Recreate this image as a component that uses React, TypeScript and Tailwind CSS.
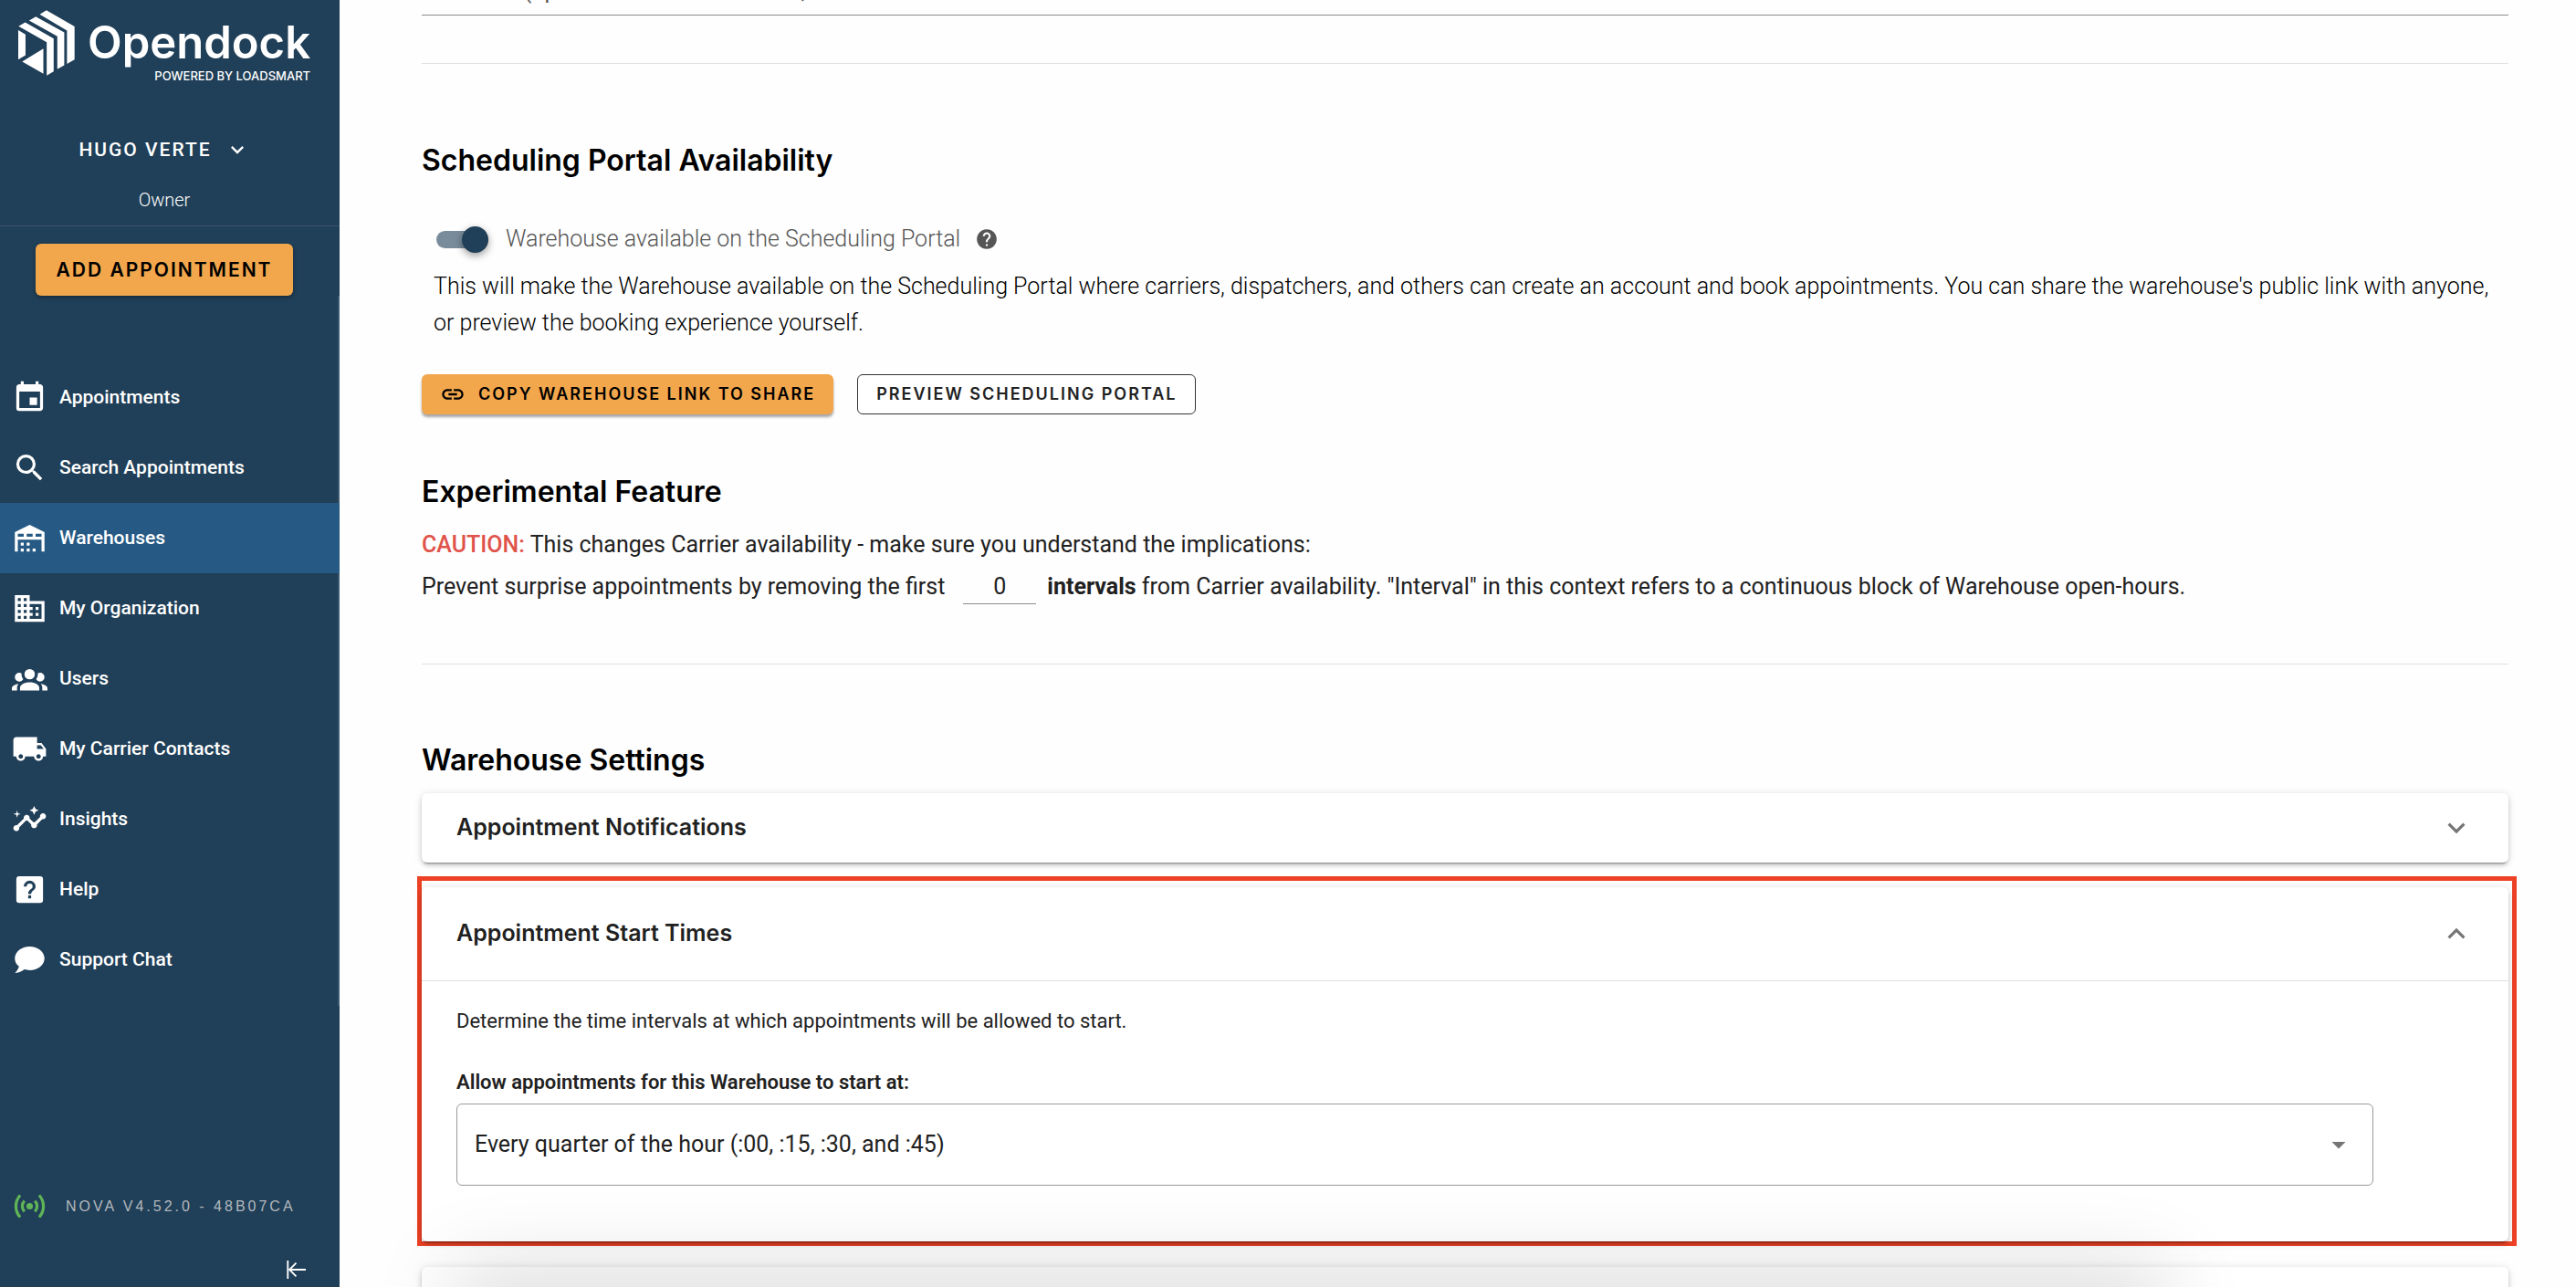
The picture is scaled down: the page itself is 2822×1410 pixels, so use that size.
import * as React from "react";
import {
    MdBusiness,
    MdEvent,
    MdHelp,
    MdInsights,
    MdKeyboardArrowDown,
    MdKeyboardArrowUp,
    MdLink,
    MdLocalShipping,
    MdSearch,
    MdArrowDropDown,
} from "react-icons/md";

type IconProps = { className?: string };

const WarehouseIcon: React.FC<IconProps> = ({ className }) => (
    <svg viewBox="0 0 24 24" fill="currentColor" className={className} aria-hidden="true">
        <path d="M6 19H8V21H6V19M12 3L2 8V21H4V13H20V21H22V8L12 3M8 11H4V9H8V11M14 11H10V9H14V11M20 11H16V9H20V11M6 15H8V17H6V15M10 15H12V17H10V15M10 19H12V21H10V19M14 19H16V21H14V19Z" />
    </svg>
);

const UsersIcon: React.FC<IconProps> = ({ className }) => (
    <svg viewBox="0 0 24 24" fill="currentColor" className={className} aria-hidden="true">
        <path d="M12,5.5A3.5,3.5 0 0,1 15.5,9A3.5,3.5 0 0,1 12,12.5A3.5,3.5 0 0,1 8.5,9A3.5,3.5 0 0,1 12,5.5M5,8C5.56,8 6.08,8.15 6.53,8.42C6.38,9.85 6.8,11.27 7.66,12.38C7.16,13.34 6.16,14 5,14A3,3 0 0,1 2,11A3,3 0 0,1 5,8M19,8A3,3 0 0,1 22,11A3,3 0 0,1 19,14C17.84,14 16.84,13.34 16.34,12.38C17.2,11.27 17.62,9.85 17.47,8.42C17.92,8.15 18.44,8 19,8M5.5,18.25C5.5,16.18 8.41,14.5 12,14.5C15.59,14.5 18.5,16.18 18.5,18.25V20H5.5V18.25M0,20V18.5C0,17.11 1.89,15.94 4.45,15.6C3.86,16.28 3.5,17.22 3.5,18.25V20H0M24,20H20.5V18.25C20.5,17.22 20.14,16.28 19.55,15.6C22.11,15.94 24,17.11 24,18.5V20Z" />
    </svg>
);

const HelpBoxIcon: React.FC<IconProps> = ({ className }) => (
    <svg viewBox="0 0 24 24" fill="currentColor" className={className} aria-hidden="true">
        <path d="M11,18H13V16H11V18M12,6A4,4 0 0,0 8,10H10A2,2 0 0,1 12,8A2,2 0 0,1 14,10C14,12 11,11.75 11,15H13C13,12.75 16,12.5 16,10A4,4 0 0,0 12,6M5,3H19A2,2 0 0,1 21,5V19A2,2 0 0,1 19,21H5A2,2 0 0,1 3,19V5A2,2 0 0,1 5,3Z" fillRule="evenodd" />
    </svg>
);

const ChatIcon: React.FC<IconProps> = ({ className }) => (
    <svg viewBox="0 0 24 24" fill="currentColor" className={className} aria-hidden="true">
        <path d="M12 3C17.5 3 22 6.58 22 11S17.5 19 12 19C10.76 19 9.57 18.82 8.47 18.5C5.55 21 2 21 2 21C4.33 18.67 4.7 17.1 4.75 16.5C3.05 15.07 2 13.13 2 11C2 6.58 6.5 3 12 3Z" />
    </svg>
);

const BroadcastIcon: React.FC<IconProps> = ({ className }) => (
    <svg viewBox="0 0 24 24" fill="none" stroke="currentColor" strokeWidth="2" className={className} aria-hidden="true">
        <circle cx="12" cy="12" r="2.2" fill="currentColor" stroke="none" />
        <path d="M8.5 8.4a5.1 5.1 0 0 0 0 7.2M15.5 8.4a5.1 5.1 0 0 1 0 7.2M5.6 4.6a11 11 0 0 0 0 14.8M18.4 4.6a11 11 0 0 1 0 14.8" />
    </svg>
);

const CollapseIcon: React.FC<IconProps> = ({ className }) => (
    <svg viewBox="0 0 24 24" fill="none" stroke="currentColor" strokeWidth="2" className={className} aria-hidden="true">
        <path d="M2.5 1v22M24 12H5M12.5 4l-8 8 8 8" />
    </svg>
);

const Logo = () => (
    <a href="#" className="flex items-start gap-3.5 pt-[11px] pl-5 text-white">
        <svg viewBox="60 33 187 216" fill="currentColor" className="h-[72px] w-[62px] shrink-0" aria-hidden="true">
            <path d="M153 33 246 87V196L221 210V100L131 47Z" />
            <path d="M118 54 212 106V215L189 228V119L96 67Z" />
            <path d="M83 73 177 127V235L154 249V139L61 86Z" />
            <path d="M60 99 84 113V182L60 196Z" />
            <path d="M143 160V243L73 203Z" />
        </svg>
        <span className="flex flex-col items-end pt-2">
            <span className="text-[49px] leading-[56px] font-semibold">Opendock</span>
            <span className="text-[13px] leading-4 font-medium">POWERED BY LOADSMART</span>
        </span>
    </a>
);

const navItems = [
    { label: "Appointments", icon: MdEvent, active: false },
    { label: "Search Appointments", icon: MdSearch, active: false },
    { label: "Warehouses", icon: WarehouseIcon, active: true },
    { label: "My Organization", icon: MdBusiness, active: false },
    { label: "Users", icon: UsersIcon, active: false },
    { label: "My Carrier Contacts", icon: MdLocalShipping, active: false },
    { label: "Insights", icon: MdInsights, active: false },
    { label: "Help", icon: HelpBoxIcon, active: false },
    { label: "Support Chat", icon: ChatIcon, active: false },
];

const Sidebar = () => (
    <aside className="flex w-[372px] shrink-0 flex-col bg-[#203f58] font-['Inter',sans-serif] text-white">
        <Logo />
        <div className="mt-[53px] flex flex-col items-center border-b border-[#3b566c] pr-3 pb-3.5 font-['Roboto',sans-serif]">
            <button type="button" className="flex items-center gap-3.5 text-[21px] leading-10 font-medium tracking-[2px]">
                HUGO VERTE
                <MdKeyboardArrowDown className="size-7" />
            </button>
            <span className="mt-[21px] text-xl leading-7 font-light">Owner</span>
        </div>
        <button
            type="button"
            className="mt-[19px] mr-[51px] ml-[39px] h-[57px] rounded-md bg-[#f3a74d] text-[21px] font-semibold tracking-[2px] whitespace-nowrap text-black shadow-[0_2px_4px_rgba(0,0,0,0.3)]"
        >
            ADD APPOINTMENT
        </button>
        <nav className="mb-[200px] flex-1 border-r-2 border-[#3c586e] pt-[73px] font-['Roboto',sans-serif]">
            {navItems.map((item) => (
                <a
                    key={item.label}
                    href="#"
                    className={`flex h-[77px] items-center gap-[13px] pl-[13px] text-[21px] font-medium ${item.active ? "-mr-0.5 bg-[#265a84]" : ""}`}
                >
                    <item.icon className="size-[39px]" />
                    {item.label}
                </a>
            ))}
        </nav>
        <div className="flex items-center gap-5 pl-[13px] font-['Liberation_Sans',sans-serif] text-base tracking-[3px] text-[#b3b9be]">
            <BroadcastIcon className="size-[39px] text-[#5fb457]" />
            NOVA V4.52.0 - 48B07CA
        </div>
        <button type="button" aria-label="Collapse menu" className="mt-[39px] mr-[37px] mb-2 self-end">
            <CollapseIcon className="size-[22px]" />
        </button>
    </aside>
);

type PanelProps = {
    title?: string;
    open?: boolean;
    children?: React.ReactNode;
};

const Panel: React.FC<PanelProps> = ({ title, open, children }) => (
    <section className="rounded-md bg-white shadow-[0_4px_2px_-3px_rgba(0,0,0,0.35),0_3px_4px_rgba(0,0,0,0.16),0_1px_10px_rgba(0,0,0,0.12)]">
        <button
            type="button"
            aria-expanded={!!open}
            className={`flex w-full items-center justify-between px-[38px] font-['Inter',sans-serif] text-[25px] font-semibold text-[#212121] ${open ? "h-[103px] border-b border-[#dedede]" : "h-[76px]"}`}
        >
            {title}
            {open ? (
                <MdKeyboardArrowUp className="size-[38px] text-[#757575]" />
            ) : (
                <MdKeyboardArrowDown className="size-[38px] text-[#757575]" />
            )}
        </button>
        {children}
    </section>
);

const heading = "font-['Inter',sans-serif] text-[32px] leading-10 font-semibold text-black";

export default function App() {
    const [available, setAvailable] = React.useState(true);
    const [intervals, setIntervals] = React.useState("0");
    const [startAt, setStartAt] = React.useState("quarter");

    return (
        <div className="flex h-screen overflow-hidden bg-[#fefefe] font-['Roboto',sans-serif] text-[25px] text-[#212121]">
            <Sidebar />
            <main className="relative flex-1 overflow-hidden pr-[74px] pl-[90px]">
                <input
                    type="text"
                    aria-label="Dock info"
                    defaultValue="Dock info (optional instruction details,"
                    className="-mt-[29px] block h-[46px] w-full border-b border-[#8c8c8c] pb-2 text-[#555555]"
                />
                <hr className="mt-[52px] border-[#e0e0e0]" />

                <h2 className={`mt-[86px] ${heading}`}>Scheduling Portal Availability</h2>
                <div className="mt-12 flex items-center pl-4 leading-9 text-[#555555]">
                    <label className="flex cursor-pointer items-center gap-[19px] font-light">
                        <input
                            type="checkbox"
                            role="switch"
                            checked={available}
                            onChange={(e) => setAvailable(e.target.checked)}
                            className="peer sr-only"
                        />
                        <span className="flex h-[19px] w-[57px] items-center rounded-full bg-[#bdbdbd] peer-checked:justify-end peer-checked:bg-[#798c9b]">
                            <span className="size-[29px] rounded-full bg-[#203f58] shadow-[0_3px_8px_rgba(0,0,0,0.4)]" />
                        </span>
                        Warehouse available on the Scheduling Portal
                    </label>
                    <MdHelp className="ml-4 size-[26px]" />
                </div>
                <p className="mt-3.5 pl-[13px] leading-10 font-light text-black">
                    This will make the Warehouse available on the Scheduling Portal where carriers, dispatchers, and others can create an account and book appointments. You can share the warehouse's public link with anyone, or preview the booking experience yourself.
                </p>
                <div className="mt-9 flex gap-[26px] font-['Inter',sans-serif] text-lg font-semibold tracking-[2px]">
                    <button
                        type="button"
                        className="flex h-11 items-center gap-3.5 rounded-md bg-[#f3a74d] px-5 text-black shadow-[0_3px_3px_rgba(0,0,0,0.35)]"
                    >
                        <MdLink className="size-7" />
                        COPY WAREHOUSE LINK TO SHARE
                    </button>
                    <button type="button" className="h-11 rounded-md border border-[#333333] bg-white px-5">
                        PREVIEW SCHEDULING PORTAL
                    </button>
                </div>

                <h2 className={`mt-[65px] ${heading}`}>Experimental Feature</h2>
                <p className="mt-[18px] leading-10">
                    <strong className="font-medium text-[#e0534a]">CAUTION:</strong> This changes Carrier availability - make sure you understand the implications:
                </p>
                <div className="mt-1.5 flex items-center leading-10">
                    <label htmlFor="intervals">Prevent surprise appointments by removing the first</label>
                    <input
                        id="intervals"
                        type="text"
                        value={intervals}
                        onChange={(e) => setIntervals(e.target.value)}
                        className="mr-3 ml-5 h-[38px] w-20 border-b border-[#8c8c8c] text-center"
                    />
                    <span>
                        <b className="font-bold">intervals</b> from Carrier availability. "Interval" in this context refers to a continuous block of Warehouse open-hours.
                    </span>
                </div>
                <hr className="mt-16 border-[#e0e0e0]" />

                <h2 className={`mt-[85px] mb-4 ${heading}`}>Warehouse Settings</h2>
                <Panel title="Appointment Notifications" />
                <div className="mt-[15px] -mr-[9px] -ml-[5px] border-[5px] border-[#ec4125] pt-[7px] pr-1">
                    <Panel title="Appointment Start Times" open>
                        <div className="pt-7 pr-[148px] pb-[61px] pl-[38px]">
                            <p className="text-[22px] leading-8">Determine the time intervals at which appointments will be allowed to start.</p>
                            <label htmlFor="start-at" className="mt-[35px] block text-[22px] leading-8 font-semibold">
                                Allow appointments for this Warehouse to start at:
                            </label>
                            <div className="mt-[7px] grid items-center">
                                <select
                                    id="start-at"
                                    value={startAt}
                                    onChange={(e) => setStartAt(e.target.value)}
                                    className="col-start-1 row-start-1 h-[90px] w-full appearance-none rounded-md border border-[#9a9a9a] px-[19px]"
                                >
                                    <option value="hour">Every hour (:00)</option>
                                    <option value="half">Every half hour (:00 and :30)</option>
                                    <option value="quarter">Every quarter of the hour (:00, :15, :30, and :45)</option>
                                </select>
                                <MdArrowDropDown className="pointer-events-none col-start-1 row-start-1 mr-5 size-9 justify-self-end text-[#757575]" />
                            </div>
                        </div>
                    </Panel>
                </div>
                <div className="mt-[23px]">
                    <Panel />
                </div>
                {/* shade rising from below the fold */}
                <div className="pointer-events-none absolute top-full right-[470px] left-[145px] h-10 shadow-[0_0_90px_20px_rgba(0,0,0,0.15)]" />
            </main>
        </div>
    );
}
